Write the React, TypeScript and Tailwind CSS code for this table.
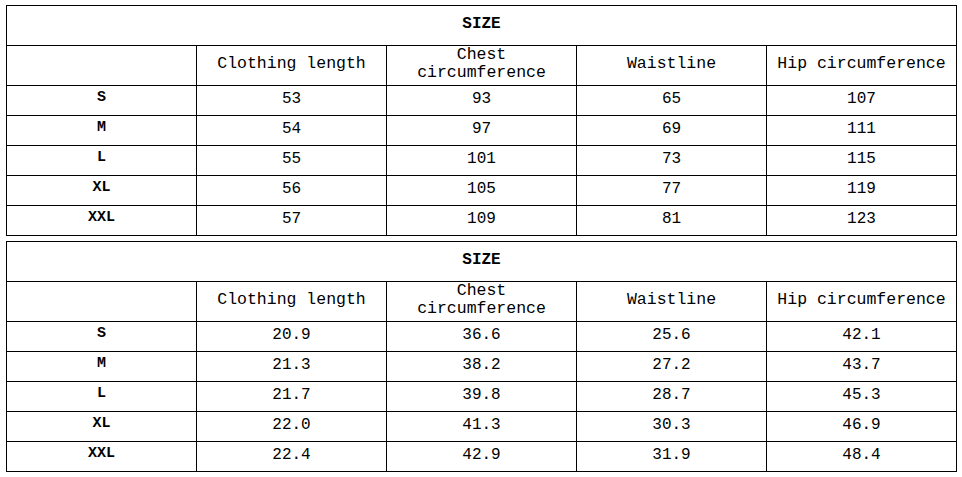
import React from "react";

const headers: React.ReactNode[] = [
  "Clothing length",
  <>
    Chest
    <br />
    circumference
  </>,
  "Waistline",
  "Hip circumference",
];

const tables = [
  [
    ["S", "53", "93", "65", "107"],
    ["M", "54", "97", "69", "111"],
    ["L", "55", "101", "73", "115"],
    ["XL", "56", "105", "77", "119"],
    ["XXL", "57", "109", "81", "123"],
  ],
  [
    ["S", "20.9", "36.6", "25.6", "42.1"],
    ["M", "21.3", "38.2", "27.2", "43.7"],
    ["L", "21.7", "39.8", "28.7", "45.3"],
    ["XL", "22.0", "41.3", "30.3", "46.9"],
    ["XXL", "22.4", "42.9", "31.9", "48.4"],
  ],
];

const SizeTable: React.FC<{ rows: string[][] }> = ({ rows }) => (
  <div className="grid grid-cols-[repeat(5,189px)] grid-rows-[39px_39px_repeat(5,29px)] gap-px bg-black p-px w-[951px]">
    <div className="col-span-5 bg-white flex items-center justify-center font-bold pb-1">SIZE</div>
    <div className="bg-white" />
    {headers.map((h, i) => (
      <div key={i} className="bg-white flex items-center justify-center text-center text-[16.5px] leading-[18px] whitespace-nowrap pb-1">
        <span>{h}</span>
      </div>
    ))}
    {rows.map((r) =>
      r.map((c, i) => (
        <div
          key={r[0] + i}
          className={`bg-white flex items-center justify-center pb-1 ${i === 0 ? "font-bold text-[15px]" : ""}`}
        >
          {c}
        </div>
      ))
    )}
  </div>
);

export default function App() {
  return (
    <div className="w-[962px] h-[477px] bg-white text-black font-['Liberation_Mono','Courier_New',monospace] text-[16px] pt-[5px] pl-[6px] flex flex-col gap-[5px]">
      {tables.map((rows, idx) => (
        <SizeTable key={idx} rows={rows} />
      ))}
    </div>
  );
}
